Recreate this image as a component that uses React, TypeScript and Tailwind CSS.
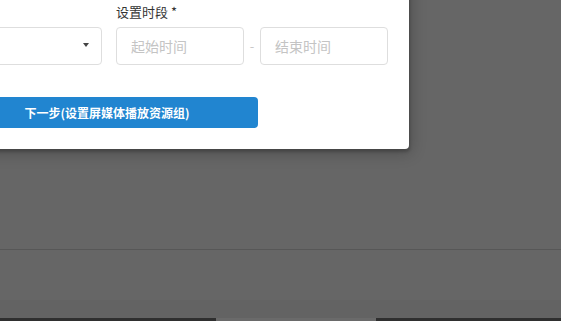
const font = { fontFamily: '"Noto Sans CJK SC", Lato, "Liberation Sans", sans-serif' };

function TimeInput({ placeholder }: { placeholder: string }) {
  return (
    <input
      type="text"
      placeholder={placeholder}
      className="h-[38px] w-[128px] rounded-[4px] border border-[#dedede] bg-white px-[14px] text-[14px] text-[#333] outline-none placeholder:text-[#c4c4c4]"
      style={font}
    />
  );
}

export default function App() {
  return (
    <div className="relative h-[321px] w-[561px] overflow-hidden bg-[#666666]" style={font}>
      {/* dimmed page behind the modal */}
      <div className="flex h-full flex-col">
        <div className="h-[249px]" />
        <div className="h-px bg-[#575757]" />
        <div className="flex-1" />
        <div className="h-[18px] bg-[#636363]" />
        <div className="flex h-[3px]">
          <div className="w-[216px] bg-[#2f2f2f]" />
          <div className="w-[160px] bg-[#6a6a6a]" />
          <div className="flex-1 bg-[#2f2f2f]" />
        </div>
      </div>

      {/* modal */}
      <div className="absolute left-[-60px] top-[-20px] w-[469px] rounded-[4px] bg-white px-[16px] pb-[21px] pt-[22px] shadow-[1px_3px_3px_0_rgba(0,0,0,0.2),1px_3px_15px_2px_rgba(0,0,0,0.2)]">
        <div className="flex items-end">
          <div className="relative h-[38px] w-[146px] rounded-[4px] border border-[#dedede] bg-white">
            <span className="absolute left-[126px] top-[15px] h-0 w-0 border-x-[3.5px] border-t-[4px] border-x-transparent border-t-[#444]" />
          </div>
          <div className="ml-[14px] flex flex-col">
            <label className="mb-[5px] h-[20px] text-[13px] leading-[20px] text-[#333]">设置时段 *</label>
            <div className="flex items-center">
              <TimeInput placeholder="起始时间" />
              <span className="w-[16px] text-center text-[13px] text-[#c8c8c8]">-</span>
              <TimeInput placeholder="结束时间" />
            </div>
          </div>
        </div>
        <button className="mt-[32px] flex h-[31px] w-[302px] items-center justify-center rounded-[4px] bg-[#2185d0] text-[12px] font-bold text-white">
          下一步(设置屏媒体播放资源组)
        </button>
      </div>
    </div>
  );
}
